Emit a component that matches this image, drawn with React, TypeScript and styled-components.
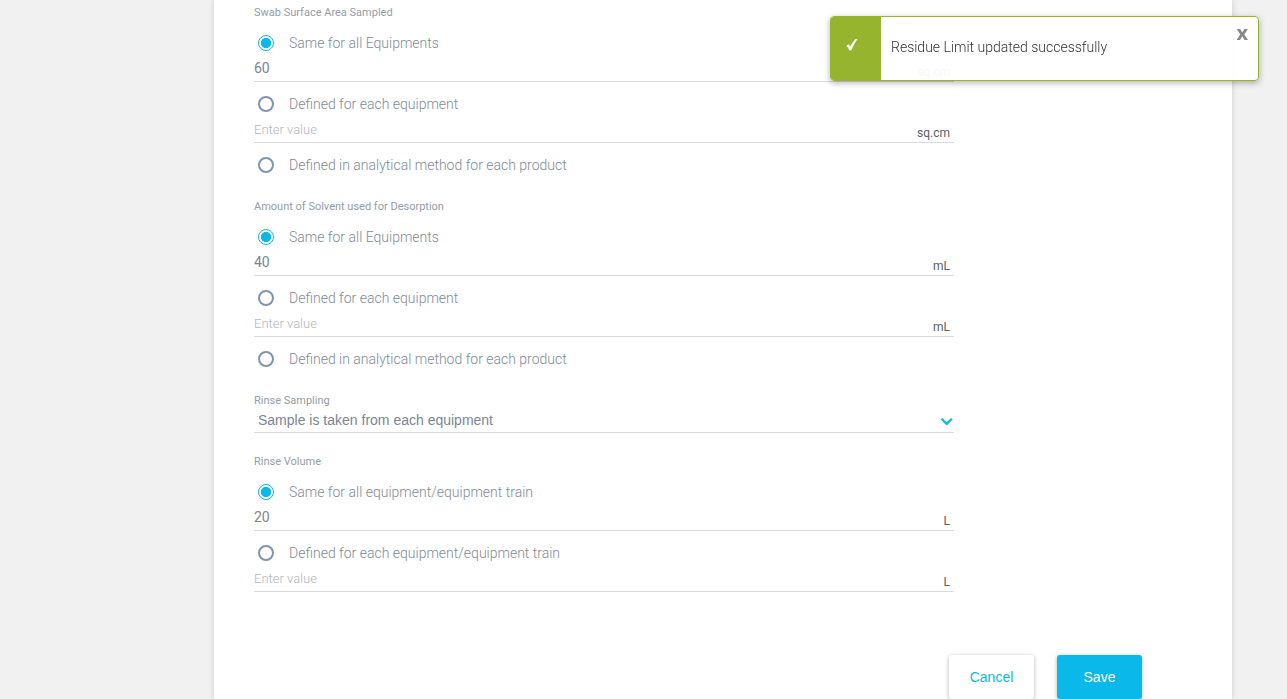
import React, { useId, useState } from "react";
import styled, { createGlobalStyle } from "styled-components";

const GlobalStyle = createGlobalStyle`
  *, *::before, *::after { box-sizing: border-box; }
  body {
    margin: 0;
    background: #f1f1f1;
    color: #7e8a98;
    font-family: Roboto, "Liberation Sans", sans-serif;
    font-size: 14px;
    font-weight: 300;
  }
`;

const Page = styled.div`
  display: flex;
  min-height: 100vh;
  padding: 0 55px 0 214px;
`;

const Card = styled.form`
  flex: 1;
  padding: 5px 40px 0;
  background: #fff;
  box-shadow: 0 0 6px rgba(0, 0, 0, 0.16);
`;

const Fields = styled.div`
  display: flex;
  flex-direction: column;
  max-width: 700px;
`;

const Group = styled.fieldset`
  min-width: 0;
  margin: 0 0 22px;
  padding: 0;
  border: 0;
`;

const Title = styled.legend`
  display: block;
  padding: 0;
  margin-bottom: 10px;
  color: #929dab;
  font-size: 11px;
  line-height: 16px;
  font-weight: 400;
`;

const Options = styled.div`
  display: flex;
  flex-direction: column;
  gap: 10px;
`;

const OptionLabel = styled.label`
  display: flex;
  align-items: center;
  gap: 15px;
  height: 24px;
  padding-left: 4px;
  cursor: pointer;
`;

const Radio = styled.input`
  appearance: none;
  flex: none;
  width: 16px;
  height: 16px;
  margin: 0;
  border: 2px solid #7d95b0;
  border-radius: 50%;
  background: #fff;

  &:checked {
    border: 1px solid #0bb8ea;
    background: radial-gradient(circle, #0bb8ea 0 70%, #fff 80%) center / 10px 10px no-repeat #fff;
    background: radial-gradient(circle closest-side, #0bb8ea 0 68%, #fff 78%);
  }
`;

const ValueRow = styled.div`
  display: flex;
  align-items: center;
  height: 27px;
  padding-right: 4px;
  border-bottom: 1px solid #d8dae0;
`;

const ValueInput = styled.input`
  flex: 1;
  min-width: 0;
  height: 26px;
  padding: 0;
  border: 0;
  outline: 0;
  background: transparent;
  color: #7a8694;
  font: 400 14px Roboto, sans-serif;

  &::placeholder {
    color: #aeb7c1;
    font-size: 13px;
    font-weight: 300;
  }
`;

const Unit = styled.span`
  padding-top: 8px;
  color: #5c6066;
  font-size: 12px;
  line-height: 16px;
  font-weight: 400;
`;

const SelectField = styled.div`
  display: flex;
  flex-direction: column;
  margin-bottom: 21px;
`;

const SelectLabel = styled.label`
  color: #929dab;
  font-size: 11px;
  line-height: 16px;
  font-weight: 400;
`;

const SelectRow = styled.div`
  display: grid;
  align-items: center;
  height: 24px;
  border-bottom: 1px solid #d8dae0;

  & > * { grid-area: 1 / 1; }
`;

const Select = styled.select`
  appearance: none;
  width: 100%;
  height: 23px;
  padding: 0 20px 2px 4px;
  border: 0;
  outline: 0;
  background: transparent;
  color: #7a8694;
  font: 400 14px "Liberation Sans", sans-serif;
`;

const Chevron = styled.svg`
  justify-self: end;
  pointer-events: none;
`;

const Actions = styled.div`
  display: flex;
  justify-content: flex-end;
  gap: 23px;
  margin-top: 41px;
  padding-right: 50px;
`;

const ActionButton = styled.button<{ $primary?: boolean }>`
  min-width: 85px;
  height: 44px;
  padding: 0 16px;
  border: 0;
  border-radius: 3px;
  background: ${(p) => (p.$primary ? "#0bb8ea" : "#fff")};
  color: ${(p) => (p.$primary ? "#fff" : "#0bb8ea")};
  box-shadow: 0 1px 4px rgba(0, 0, 0, 0.3);
  font: 400 14px "Liberation Sans", sans-serif;
  cursor: pointer;
`;

const Toast = styled.div`
  position: fixed;
  top: 16px;
  right: 28px;
  display: flex;
  width: 429px;
  min-height: 65px;
  overflow: hidden;
  border: 1px solid #97b42f;
  border-radius: 4px;
  background: rgba(255, 255, 255, 0.95);
  box-shadow: 0 2px 6px rgba(0, 0, 0, 0.3);
`;

const ToastIcon = styled.div`
  flex: none;
  width: 50px;
  padding: 21px 0 0 15px;
  background: #97b42f;
`;

const ToastText = styled.p`
  flex: 1;
  margin: 0;
  padding: 20px 0 20px 10px;
  color: #333;
  line-height: 20px;
`;

const CloseButton = styled.button`
  align-self: flex-start;
  margin-top: 6px;
  padding: 0 10px;
  border: 0;
  background: transparent;
  color: #888;
  font: 700 20px/20px "Open Sans", sans-serif;
  cursor: pointer;
`;

type Option = { label: string; unit?: string; value?: string };

function RadioGroup({ title, options }: { title: string; options: Option[] }) {
  const name = useId();
  return (
    <Group>
      <Title>{title}</Title>
      <Options>
        {options.map((o, i) => (
          <div key={o.label}>
            <OptionLabel>
              <Radio type="radio" name={name} defaultChecked={i === 0} />
              {o.label}
            </OptionLabel>
            {o.unit && (
              <ValueRow>
                <ValueInput
                  aria-label={`${title}: ${o.label}`}
                  defaultValue={o.value}
                  placeholder="Enter value"
                />
                <Unit>{o.unit}</Unit>
              </ValueRow>
            )}
          </div>
        ))}
      </Options>
    </Group>
  );
}

const equipmentOptions = (unit: string, value: string): Option[] => [
  { label: "Same for all Equipments", unit, value },
  { label: "Defined for each equipment", unit },
  { label: "Defined in analytical method for each product" },
];

export default function App() {
  const [toastOpen, setToastOpen] = useState(true);
  return (
    <>
      <GlobalStyle />
      <Page>
        <Card onSubmit={(e) => e.preventDefault()}>
          <Fields>
            <RadioGroup title="Swab Surface Area Sampled" options={equipmentOptions("sq.cm", "60")} />
            <RadioGroup title="Amount of Solvent used for Desorption" options={equipmentOptions("mL", "40")} />
            <SelectField>
              <SelectLabel htmlFor="rinse-sampling">Rinse Sampling</SelectLabel>
              <SelectRow>
                <Select id="rinse-sampling">
                  <option>Sample is taken from each equipment</option>
                </Select>
                <Chevron width="14" height="10" viewBox="0 0 14 10" fill="none" aria-hidden="true">
                  <path d="M1.5 2.7 6.7 7.9 11.9 2.7" stroke="#0bb8ea" strokeWidth="2.2" />
                </Chevron>
              </SelectRow>
            </SelectField>
            <RadioGroup
              title="Rinse Volume"
              options={[
                { label: "Same for all equipment/equipment train", unit: "L", value: "20" },
                { label: "Defined for each equipment/equipment train", unit: "L" },
              ]}
            />
          </Fields>
          <Actions>
            <ActionButton type="button">Cancel</ActionButton>
            <ActionButton type="submit" $primary>Save</ActionButton>
          </Actions>
        </Card>
      </Page>
      {toastOpen && (
        <Toast role="status">
          <ToastIcon>
            <svg width="12" height="14" viewBox="0 0 12 14" fill="none" aria-hidden="true">
              <path d="M0.4 7.8 2.8 6.2 4.3 8.5C5.8 5.6 7.6 2.8 9.6 0.9L11.6 1C9.2 4.2 7.1 7.9 5.4 12.2L3.3 12.4C2.6 10.6 1.6 9.1 0.4 7.8Z" fill="#fff" />
            </svg>
          </ToastIcon>
          <ToastText>Residue Limit updated successfully</ToastText>
          <CloseButton type="button" aria-label="Close" onClick={() => setToastOpen(false)}>
            x
          </CloseButton>
        </Toast>
      )}
    </>
  );
}
